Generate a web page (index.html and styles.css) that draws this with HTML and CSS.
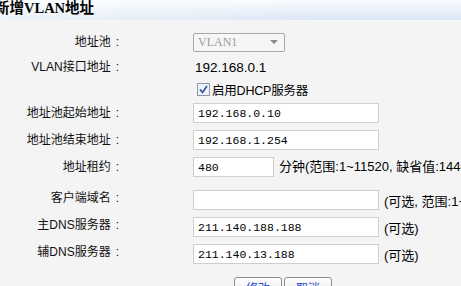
FILE: index.html
```html
<!DOCTYPE html>
<html lang="zh-CN">
<head>
    <meta charset="UTF-8">
    <title>新增VLAN地址</title>
    <link rel="stylesheet" href="styles.css">
</head>
<body>
<div class="title">新增VLAN地址</div>
<div class="form">
    <div class="row r-pool">
        <div class="label">地址池<span class="colon">:</span></div>
        <div class="field">
            <div class="select"><span>VLAN1</span><i class="arrow"></i></div>
        </div>
    </div>
    <div class="row r-ip">
        <div class="label">VLAN接口地址<span class="colon">:</span></div>
        <div class="field text">192.168.0.1</div>
    </div>
    <div class="row r-check">
        <div class="label"></div>
        <div class="field check">
            <span class="box">
                <svg viewBox="0 0 13 13" width="13" height="13">
                    <rect x="0.5" y="0.5" width="12" height="12" fill="#eef2f8" stroke="#8b98ad"/>
                    <path d="M3 6.5 L5.5 9.5 L10 3" fill="none" stroke="#2a4fa8" stroke-width="1.6"/>
                </svg>
            </span>
            启用DHCP服务器
        </div>
    </div>
    <div class="row r-in">
        <div class="label">地址池起始地址<span class="colon">:</span></div>
        <div class="field"><input class="inp" value="192.168.0.10"></div>
    </div>
    <div class="row r-in">
        <div class="label">地址池结束地址<span class="colon">:</span></div>
        <div class="field"><input class="inp" value="192.168.1.254"></div>
    </div>
    <div class="row r-in r-tall">
        <div class="label">地址租约<span class="colon">:</span></div>
        <div class="field"><input class="inp short" value="480"><span class="note">分钟(范围:1~11520, 缺省值:1440)</span></div>
    </div>
    <div class="row r-in">
        <div class="label">客户端域名<span class="colon">:</span></div>
        <div class="field"><input class="inp" value=""><span class="note gap">(可选, 范围:1~31个字符)</span></div>
    </div>
    <div class="row r-in">
        <div class="label">主DNS服务器<span class="colon">:</span></div>
        <div class="field"><input class="inp" value="211.140.188.188"><span class="note gap">(可选)</span></div>
    </div>
    <div class="row r-in">
        <div class="label">辅DNS服务器<span class="colon">:</span></div>
        <div class="field"><input class="inp" value="211.140.13.188"><span class="note gap">(可选)</span></div>
    </div>
    <div class="actions">
        <button class="btn">修改</button>
        <button class="btn">取消</button>
    </div>
</div>
</body>
</html>
```
FILE: styles.css
```css
html, body {
    margin: 0;
    padding: 0;
}
body {
    width: 461px;
    height: 286px;
    overflow: hidden;
    background: #f4f4f4;
    font-family: "Liberation Sans", "Noto Sans CJK SC", sans-serif;
    font-size: 12px;
    color: #000;
}
.title {
    height: 20px;
    line-height: 17px;
    margin-left: -5px;
    font-family: "Liberation Serif", "Noto Sans CJK SC", serif;
    font-size: 14.5px;
    font-weight: bold;
    white-space: nowrap;
    background:
        linear-gradient(90deg, rgba(255, 255, 255, 0.5), rgba(255, 255, 255, 0) 70%),
        linear-gradient(180deg, #f9fbfe 0%, #e9f0f9 55%, #dae6f5 100%);
}
.form {
    padding-top: 9px;
}
.row {
    display: flex;
    align-items: center;
    white-space: nowrap;
}
.r-pool { height: 26px; }
.r-ip { height: 24px; }
.r-check { height: 21px; }
.r-in {
    height: 27px;
    align-items: flex-start;
    padding-top: 3px;
    box-sizing: border-box;
}
.r-in:first-of-type { height: 28px; }
.r-tall { height: 31px; }
.label {
    width: 119px;
    flex: none;
    text-align: right;
    line-height: 20px;
    color: #111;
}
.colon {
    margin-left: 5px;
}
.field {
    margin-left: 74px;
    display: flex;
    align-items: center;
}
.text {
    margin-left: 76px;
    font-size: 13.5px;
}
.select {
    width: 80px;
    height: 17px;
    border: 1px solid #a9a9a9;
    border-radius: 2px;
    background: #f6f6f6;
    display: flex;
    align-items: center;
    justify-content: space-between;
    padding: 0 6px 0 4px;
    font-family: "Liberation Serif", serif;
    font-size: 12px;
    color: #9c9c9c;
}
.arrow {
    width: 0;
    height: 0;
    border-left: 4px solid transparent;
    border-right: 4px solid transparent;
    border-top: 4px solid #8a8a8a;
}
.check {
    margin-left: 78px;
    gap: 2px;
    font-size: 12.5px;
    letter-spacing: -0.2px;
}
.box {
    display: flex;
    width: 13px;
    height: 13px;
}
.inp {
    width: 186px;
    height: 20px;
    box-sizing: border-box;
    margin: 0;
    border: 1px solid #cfcfcf;
    background: #fff;
    padding: 0 4px;
    font-family: "Liberation Mono", monospace;
    font-size: 11.5px;
    color: #000;
    outline: none;
}
.short {
    width: 81px;
}
.note {
    margin-left: 5px;
    font-size: 13px;
    line-height: 20px;
}
.note.gap {
    padding-top: 4px;
}
.actions {
    display: flex;
    gap: 2px;
    padding-left: 234px;
    margin-top: 11px;
}
.btn {
    width: 48px;
    height: 20px;
    margin: 0;
    padding: 0;
    border: 1px solid #8c8c8c;
    border-radius: 3px;
    background: linear-gradient(180deg, #ffffff, #e4e4e4);
    font-family: "Liberation Sans", "Noto Sans CJK SC", sans-serif;
    font-size: 12px;
    color: #1f4fc6;
}
```
